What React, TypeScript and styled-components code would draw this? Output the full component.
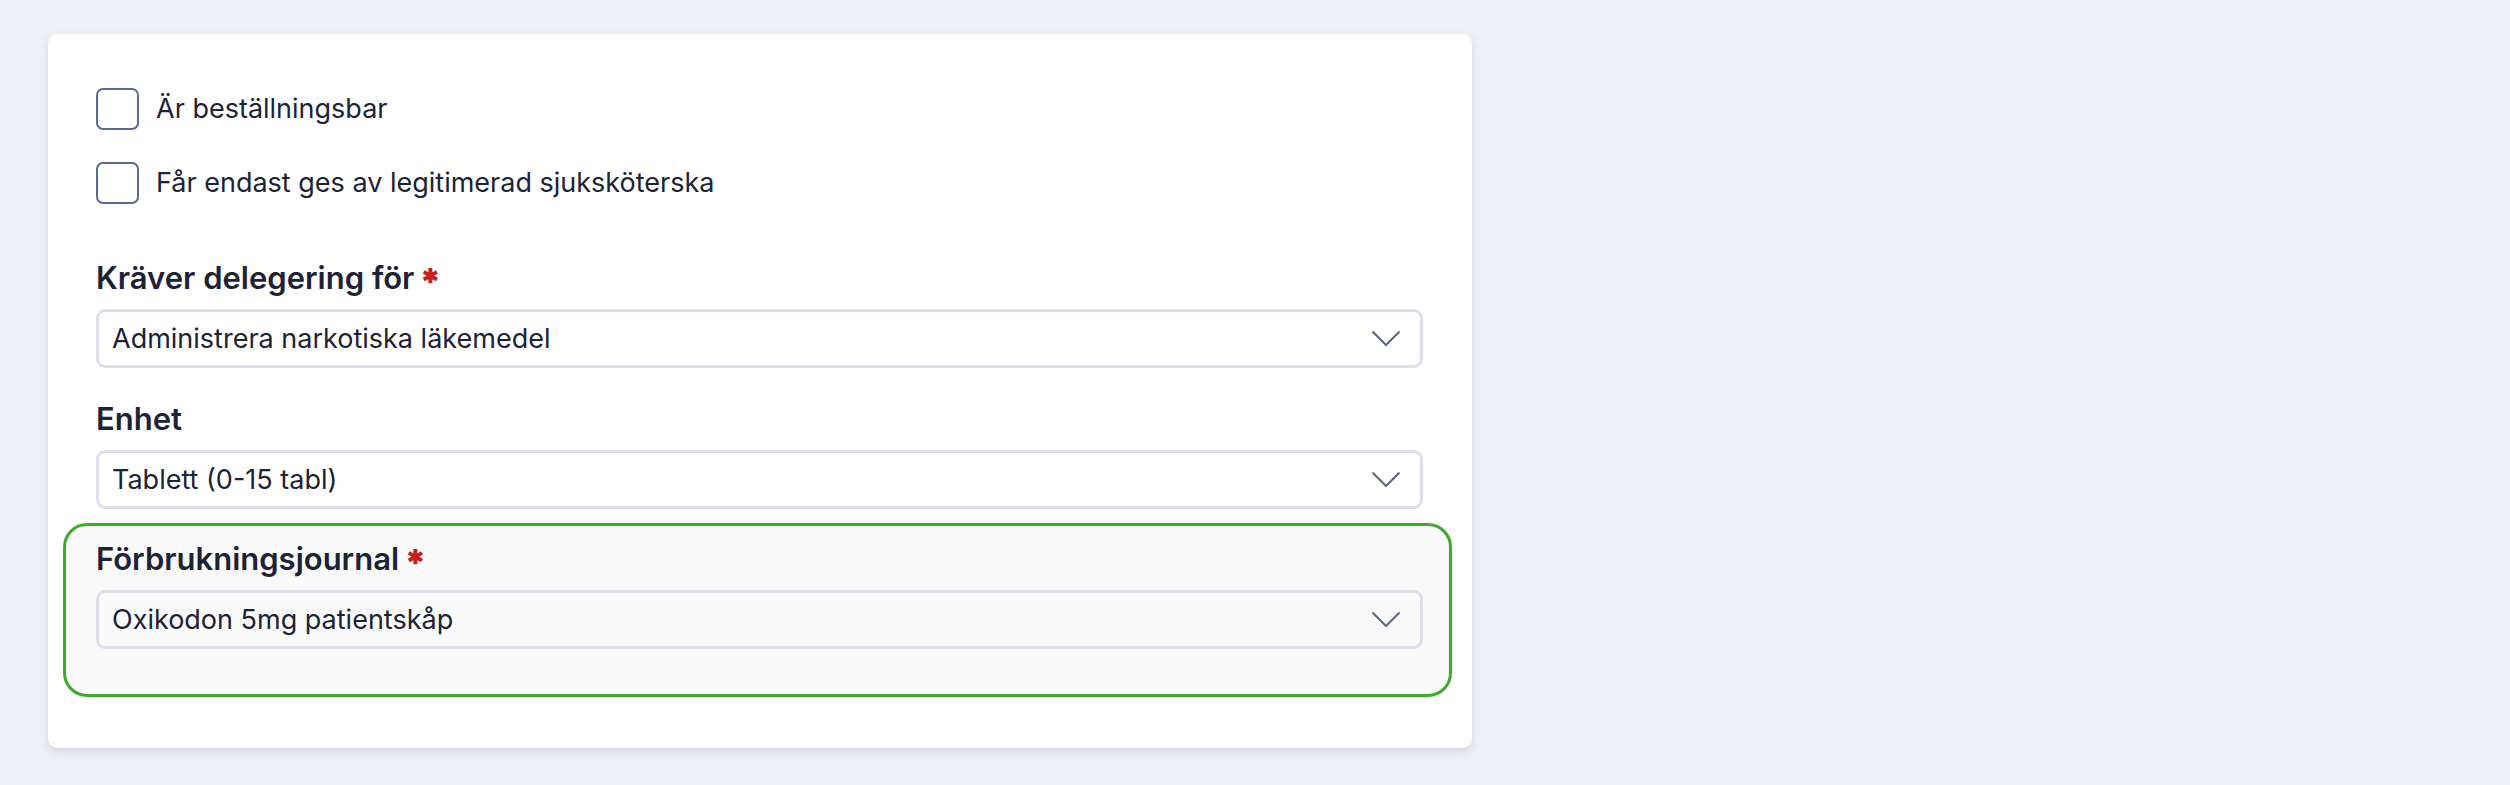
import React from 'react'
import styled, { createGlobalStyle } from 'styled-components'

const GlobalStyle = createGlobalStyle`
  html, body {
    margin: 0;
    padding: 0;
    background: #eff0f5;
    font-family: Inter, "Noto Sans", sans-serif;
    color: #1c2336;
  }
`

const Page = styled.div`
  min-height: 785px;
  padding: 34px 0 0 48px;
  box-sizing: border-box;
`

const Card = styled.div`
  width: 1424px;
  box-sizing: border-box;
  padding: 54px 49px 51px 48px;
  background: #ffffff;
  border-radius: 10px;
  box-shadow: 0 4px 10px rgba(180, 186, 210, 0.45);
`

const CheckList = styled.div`
  display: flex;
  flex-direction: column;
  gap: 32px;
  margin-bottom: 56px;
`

const CheckRow = styled.label`
  display: flex;
  align-items: center;
  gap: 17px;
  font-size: 27px;
  line-height: 42px;
`

const Box = styled.span`
  width: 43px;
  height: 42px;
  box-sizing: border-box;
  border: 2px solid #5c6c8c;
  border-radius: 7px;
  flex-shrink: 0;
`

const Field = styled.div<{ $gap?: number }>`
  margin-bottom: ${p => p.$gap ?? 0}px;
`

const Label = styled.div`
  font-size: 31px;
  line-height: 36px;
  font-weight: 600;
  margin-bottom: 13px;
  display: flex;
  align-items: flex-start;
`

const Star = styled.span`
  color: #c81e1e;
  font-size: 20px;
  line-height: 20px;
  margin-left: 8px;
  margin-top: 6px;
`

const SelectBox = styled.div`
  height: 59px;
  box-sizing: border-box;
  border: 3px solid #dde0ec;
  border-radius: 9px;
  padding: 0 19px 0 13px;
  display: flex;
  align-items: center;
  justify-content: space-between;
  font-size: 27px;
  color: #1c2336;
`

const Highlight = styled.div`
  margin: 0 -29px 0 -33px;
  padding: 15px 26px 45px 30px;
  border: 3px solid #3fab2c;
  border-radius: 24px;
  background: #fafafa;

  ${SelectBox} {
    background: #fafafa;
  }
`

const Chevron: React.FC = () => (
  <svg width="30" height="17" viewBox="0 0 30 17" fill="none">
    <path d="M1.5 1.5 L15 15 L28.5 1.5" stroke="#5a6580" strokeWidth="2" />
  </svg>
)

const Select: React.FC<{ value: string }> = ({ value }) => (
  <SelectBox>
    <span>{value}</span>
    <Chevron />
  </SelectBox>
)

const App: React.FC = () => {
  return (
    <Page>
      <GlobalStyle />
      <Card>
        <CheckList>
          <CheckRow><Box />Är beställningsbar</CheckRow>
          <CheckRow><Box />Får endast ges av legitimerad sjuksköterska</CheckRow>
        </CheckList>
        <Field $gap={33}>
          <Label>Kräver delegering för<Star>✱</Star></Label>
          <Select value="Administrera narkotiska läkemedel" />
        </Field>
        <Field $gap={14}>
          <Label>Enhet</Label>
          <Select value="Tablett (0-15 tabl)" />
        </Field>
        <Highlight>
          <Label>Förbrukningsjournal<Star>✱</Star></Label>
          <Select value="Oxikodon 5mg patientskåp" />
        </Highlight>
      </Card>
    </Page>
  )
}

export default App
